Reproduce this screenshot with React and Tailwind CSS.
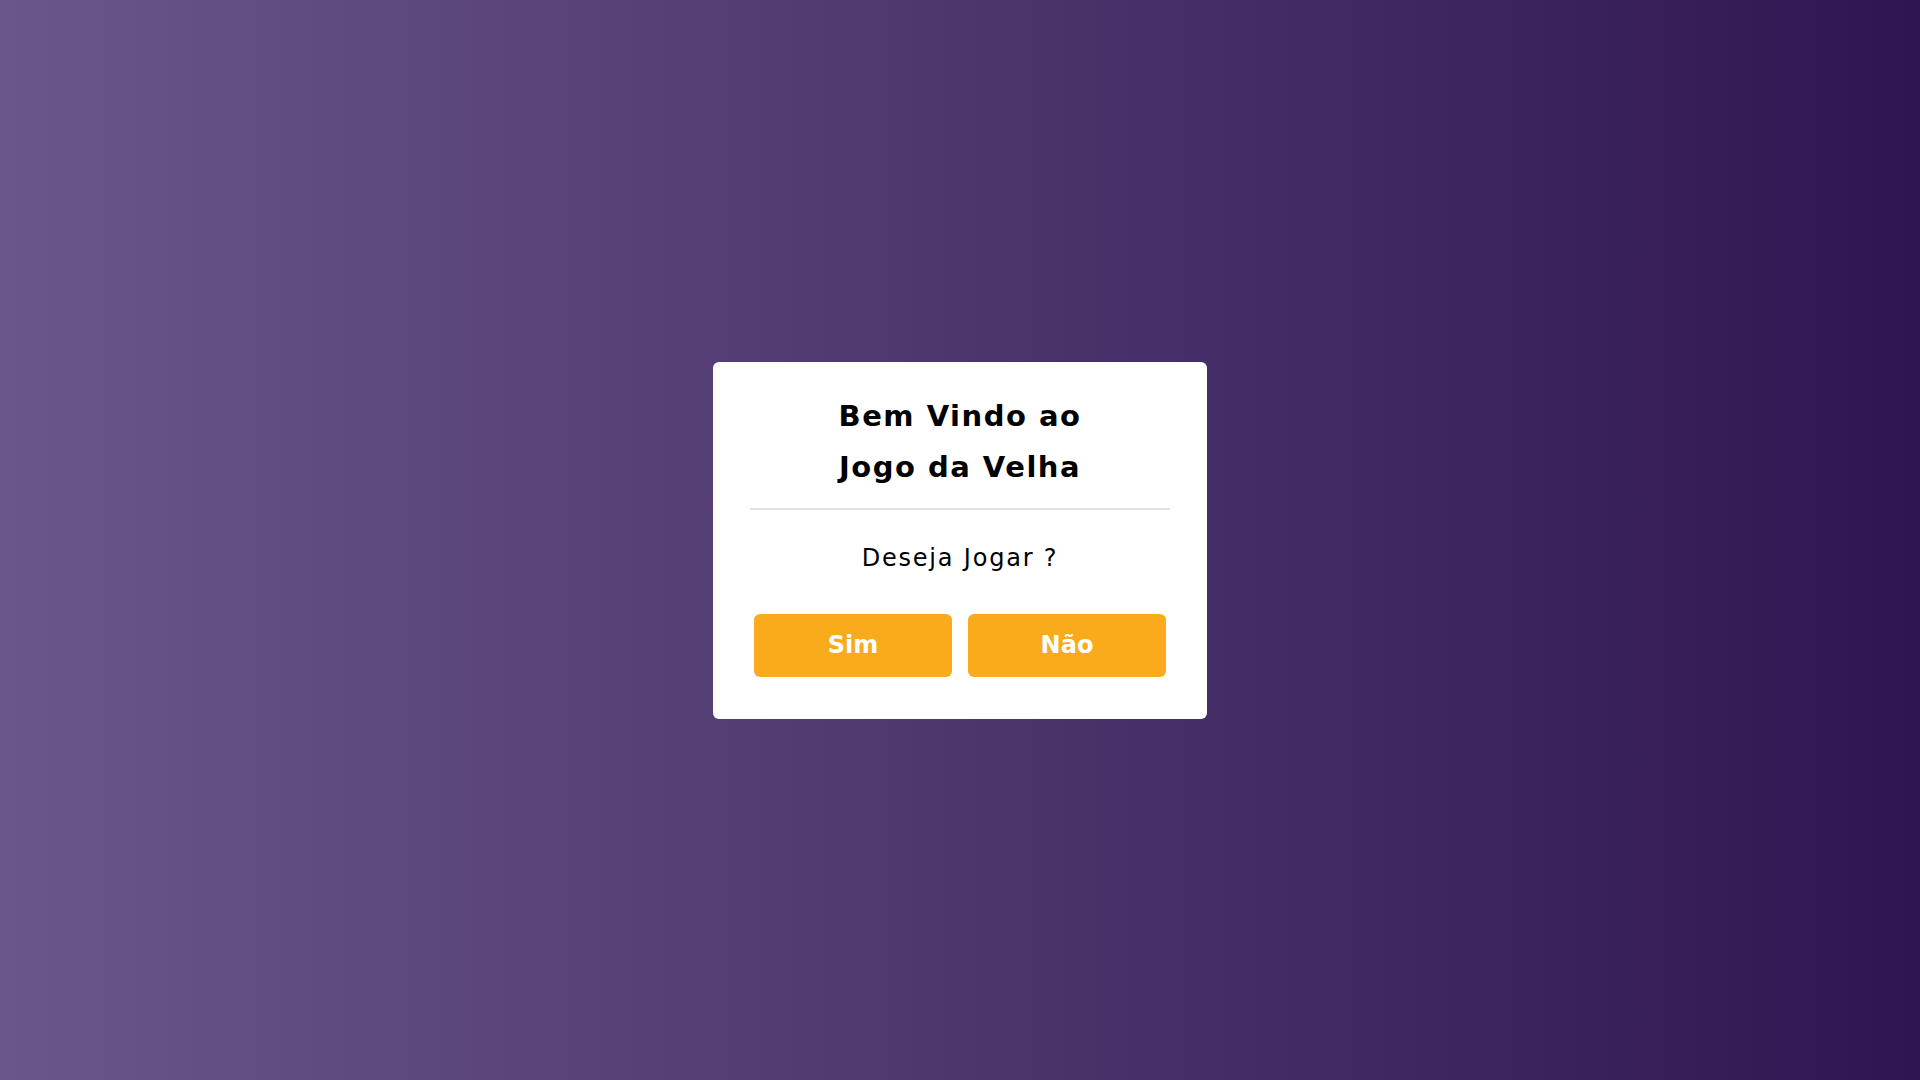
export default function App() {
  return (
    <div
      className="w-full h-screen flex items-center justify-center bg-[linear-gradient(to_right,#6a5689,#2f1652)]"
      style={{ fontFamily: "'DejaVu Sans', Inter, sans-serif" }}
    >
      <div className="w-[494px] bg-white rounded-[6px] flex flex-col pt-[29px] pb-[42px] px-[37px]">
        <h1 className="text-center text-black font-bold text-[29px] leading-[51px] tracking-[1.5px]">
          Bem Vindo ao
          <br />
          Jogo da Velha
        </h1>
        <div className="mt-[15px] h-[2px] bg-[#e2e2e2]" />
        <p className="mt-[30px] text-center text-black text-[24px] leading-[36px] tracking-[1.8px]">
          Deseja Jogar ?
        </p>
        <div className="mt-[38px] px-[4px] flex gap-[16px]">
          <button className="flex-1 h-[63px] rounded-[6px] bg-[#f9ab1b] text-white font-bold text-[24px]">
            Sim
          </button>
          <button className="flex-1 h-[63px] rounded-[6px] bg-[#f9ab1b] text-white font-bold text-[24px]">
            Não
          </button>
        </div>
      </div>
    </div>
  );
}
